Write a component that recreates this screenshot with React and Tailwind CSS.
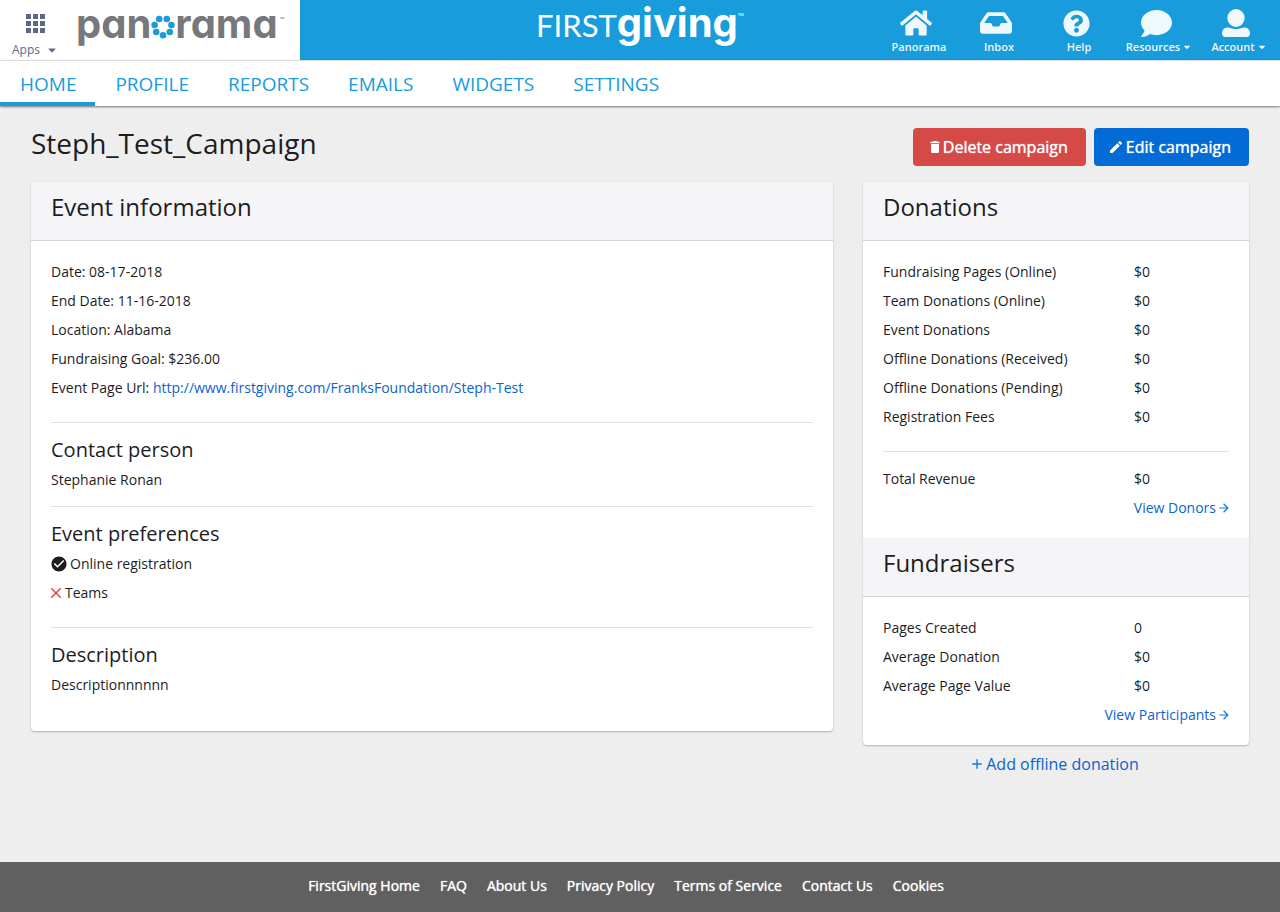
import React from 'react';
import { FaHome, FaInbox, FaQuestionCircle, FaComment, FaCaretDown } from 'react-icons/fa';
import { MdDelete, MdEdit, MdArrowForward, MdAdd, MdClose, MdCheckCircle } from 'react-icons/md';

const tabs = ['HOME', 'PROFILE', 'REPORTS', 'EMAILS', 'WIDGETS', 'SETTINGS'];
const donations = [
  ['Fundraising Pages (Online)', '$0'],
  ['Team Donations (Online)', '$0'],
  ['Event Donations', '$0'],
  ['Offline Donations (Received)', '$0'],
  ['Offline Donations (Pending)', '$0'],
  ['Registration Fees', '$0'],
];
const fundraisers = [
  ['Pages Created', '0'],
  ['Average Donation', '$0'],
  ['Average Page Value', '$0'],
];
const footerLinks = ['FirstGiving Home', 'FAQ', 'About Us', 'Privacy Policy', 'Terms of Service', 'Contact Us', 'Cookies'];

function UserIcon() {
  return (
    <svg viewBox="0 0 28 28" className="h-7 w-7" fill="currentColor" aria-hidden="true">
      <ellipse cx="14" cy="9" rx="8.7" ry="9" />
      <path d="M5.5 18.5 C8 18.5 9.5 20 14 20 C18.5 20 20 18.5 22.5 18.5 C26.5 18.5 28 22 28 24.5 C28 27 26.5 28 24.5 28 H3.5 C1.5 28 0 27 0 24.5 C0 22 1.5 18.5 5.5 18.5 Z" />
    </svg>
  );
}

const menu = [
  { label: 'Panorama', icon: <FaHome className="size-8" /> },
  { label: 'Inbox', icon: <FaInbox className="size-8" /> },
  { label: 'Help', icon: <FaQuestionCircle className="size-[27px]" /> },
  { label: 'Resources', icon: <FaComment className="size-[31px]" />, caret: true },
  { label: 'Account', icon: <UserIcon />, caret: true },
];

function PanoramaLogo() {
  return (
    <a
      href="#panorama"
      aria-label="panorama"
      className="flex items-start font-[Inter,sans-serif] text-[40px] leading-[48px] font-bold text-[#77787b] [font-feature-settings:'cv11']"
    >
      <span>pan</span>
      <svg viewBox="0 0 24 24" className="mt-[15px] size-6" fill="#189cdb" aria-hidden="true">
        <circle cx="8.2" cy="4" r="3.3" />
        <circle cx="15.8" cy="4" r="3.3" />
        <circle cx="3.6" cy="10" r="3.3" />
        <circle cx="20.4" cy="10" r="3.3" />
        <circle cx="5.2" cy="17" r="3.3" />
        <circle cx="18.8" cy="17" r="3.3" />
        <circle cx="12" cy="20.2" r="3.3" />
      </svg>
      <span>rama</span>
      <span className="pt-3.5 pl-0.5 text-[8px] leading-3 font-normal">™</span>
    </a>
  );
}

function FirstGivingLogo() {
  return (
    <a href="#firstgiving" className="flex items-start text-white">
      <span className="font-[Lato,sans-serif] text-[31px] leading-[50px]">FIRST</span>
      <span className="font-[Inter,sans-serif] text-[40px] leading-[46px] font-bold">giving</span>
      <span className="pt-2.5 text-[8px] leading-3">™</span>
    </a>
  );
}

function CardHeader({ children }) {
  return (
    <h2 className="h-[59px] border-b border-[#d5d5d8] bg-[#f5f5f8] px-5 pt-2 text-2xl leading-[34px]">{children}</h2>
  );
}

function Section({ title, children, className }) {
  return (
    <section className={`border-t border-[#e0e0e0] pt-3 ${className}`}>
      <h3 className="text-xl leading-[30px]">{title}</h3>
      {children}
    </section>
  );
}

function Stats({ rows }) {
  return (
    <table className="w-full">
      <tbody>
        {rows.map(([label, value]) => (
          <tr key={label} className="h-[29px]">
            <th scope="row" className="p-0 text-left font-normal">{label}</th>
            <td className="w-[95px] p-0">{value}</td>
          </tr>
        ))}
      </tbody>
    </table>
  );
}

function MoreLink({ href, children }) {
  return (
    <div className="flex justify-end">
      <a href={href} className="-mr-0.5 flex items-center gap-px text-[#0b63ce]">
        {children}
        <MdArrowForward className="size-3.5 text-[#0b78dc]" />
      </a>
    </div>
  );
}

export default function App() {
  return (
    <div className="flex min-h-screen flex-col bg-[#eeeeee] font-['Open_Sans',sans-serif] text-[#1d1d1f]">
      <header className="grid h-15 grid-cols-[1fr_auto_1fr] bg-[#189cdb]">
        <div className="flex h-15 w-[300px] bg-white">
          <button type="button" className="flex w-[70px] flex-col items-center pt-3.5 text-[#5b6987]">
            <svg viewBox="0 0 19 19" className="size-[19px]" fill="currentColor" aria-hidden="true">
              {[0, 7, 14].map((y) => [0, 7, 14].map((x) => <rect key={`${x}-${y}`} x={x} y={y} width="5" height="5" />))}
            </svg>
            <span className="mt-2 flex items-center gap-1.5 text-xs leading-[18px]">
              Apps <FaCaretDown className="size-3" />
            </span>
          </button>
          <div className="pl-1.5">
            <PanoramaLogo />
          </div>
        </div>
        <FirstGivingLogo />
        <nav aria-label="Account" className="flex justify-end pr-px text-[11px] font-semibold text-[#eef8fd]">
          {menu.map((item) => (
            <a key={item.label} href={`#${item.label.toLowerCase()}`} className="flex w-20 flex-col items-center">
              <span className="flex h-10 items-end justify-center pr-1.5">
                <span className="flex h-[34px] items-center">{item.icon}</span>
              </span>
              <span className="flex items-center gap-0.5 leading-[14px]">
                {item.label}
                {item.caret && <FaCaretDown className="size-2.5" />}
              </span>
            </a>
          ))}
        </nav>
      </header>

      <nav aria-label="Main" className="flex h-[46px] border-t border-[#dddddd] bg-white text-[19px] text-[#189cdb] shadow-[0_1px_2px_rgba(0,0,0,0.5)]">
        {tabs.map((tab, i) => (
          <a
            key={tab}
            href={`#${tab.toLowerCase()}`}
            aria-current={i === 0 ? 'page' : undefined}
            className={`border-b-4 pr-[19px] pl-5 leading-[46px] ${i === 0 ? 'border-[#189cdb]' : 'border-transparent'}`}
          >
            {tab}
          </a>
        ))}
      </nav>

      <main className="px-4 pb-8 text-sm leading-[29px]">
        <div className="flex items-start justify-between px-[15px] pt-[22px] pb-4">
          <h1 className="text-[28px] leading-[30px]">Steph_Test_Campaign</h1>
          <div className="flex gap-2 text-base leading-[38px] text-white">
            <button type="button" className="flex items-center rounded bg-[#d54a47] pr-[18px] pl-3.5 [text-shadow:0_0_1px_currentColor]">
              <MdDelete className="size-4" />
              Delete campaign
            </button>
            <button type="button" className="flex items-center gap-0.5 rounded bg-[#036bd6] pr-[18px] pl-3.5 [text-shadow:0_0_1px_currentColor]">
              <MdEdit className="size-4" />
              Edit campaign
            </button>
          </div>
        </div>

        <div className="flex items-start">
          <div className="w-2/3 px-[15px]">
            <div className="overflow-hidden rounded-sm bg-white shadow-[0_1px_2px_rgba(0,0,0,0.25)]">
              <CardHeader>Event information</CardHeader>
              <div className="px-5 pt-4 pb-8">
                <div className="pb-5">
                  <p>Date: 08-17-2018</p>
                  <p>End Date: 11-16-2018</p>
                  <p>Location: Alabama</p>
                  <p>Fundraising Goal: $236.00</p>
                  <p>
                    Event Page Url:{' '}
                    <a href="#event-page" className="text-[#0b63ce]">http://www.firstgiving.com/FranksFoundation/Steph-Test</a>
                  </p>
                </div>
                <Section title="Contact person" className="pb-3">
                  <p>Stephanie Ronan</p>
                </Section>
                <Section title="Event preferences" className="pb-5">
                  <p className="flex items-center gap-0.5">
                    <MdCheckCircle className="-ml-px size-[18px]" />
                    Online registration
                  </p>
                  <p className="flex items-center">
                    <MdClose className="-ml-1 size-[18px] text-[#dc4a50]" />
                    Teams
                  </p>
                </Section>
                <Section title="Description" className="">
                  <p>Descriptionnnnnn</p>
                </Section>
              </div>
            </div>
          </div>

          <div className="w-1/3 px-[15px]">
            <div className="overflow-hidden rounded-sm bg-white shadow-[0_1px_2px_rgba(0,0,0,0.25)]">
              <CardHeader>Donations</CardHeader>
              <div className="px-5 py-4">
                <Stats rows={donations} />
                <div className="mt-5 border-t border-[#e0e0e0] pt-3">
                  <Stats rows={[['Total Revenue', '$0']]} />
                  <MoreLink href="#donors">View Donors</MoreLink>
                </div>
              </div>
              <CardHeader>Fundraisers</CardHeader>
              <div className="px-5 py-4">
                <Stats rows={fundraisers} />
                <MoreLink href="#participants">View Participants</MoreLink>
              </div>
            </div>
            <div className="flex justify-center pt-1 pr-1 text-base leading-[30px]">
              <a href="#offline" className="flex items-center gap-px text-[#0b63ce]">
                <MdAdd className="size-4 text-[#0b78dc]" />
                Add offline donation
              </a>
            </div>
          </div>
        </div>
      </main>

      <footer className="mt-auto flex h-[50px] justify-center gap-5 bg-[#606060] pr-7 text-sm leading-[48px] text-white [text-shadow:0_0_1px_currentColor]">
        {footerLinks.map((label) => (
          <a key={label} href={`#${label.toLowerCase().replaceAll(' ', '-')}`}>{label}</a>
        ))}
      </footer>
    </div>
  );
}
